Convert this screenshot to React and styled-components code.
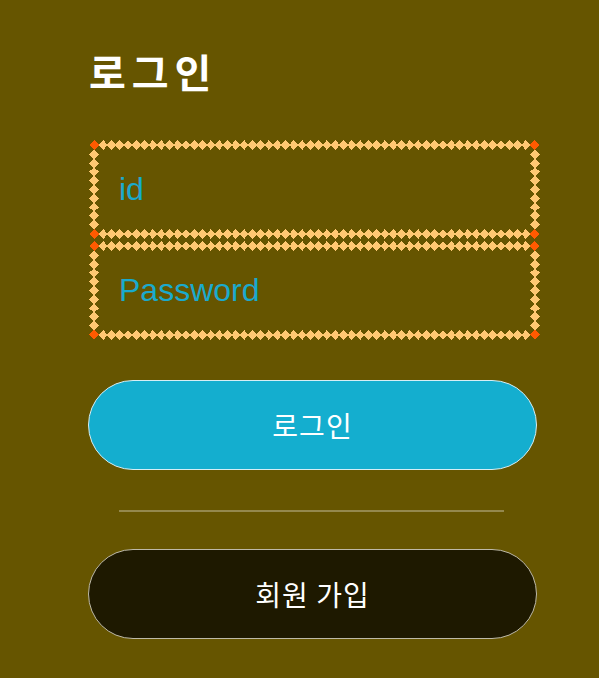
import React from "react";
import styled, { createGlobalStyle } from "styled-components";

const GlobalStyle = createGlobalStyle`
  html, body {
    margin: 0;
    padding: 0;
    background: #665500;
  }
  body {
    font-family: "Liberation Sans", "Noto Sans CJK KR", sans-serif;
  }
`;

const diamondSvg =
  "data:image/svg+xml," +
  encodeURIComponent(
    `<svg xmlns='http://www.w3.org/2000/svg' width='85' height='85' viewBox='0 0 85 85' shape-rendering='crispEdges'>` +
      `<g fill='#ff5a00'>` +
      `<polygon points='15,0 30,15 15,30 0,15'/>` +
      `<polygon points='70,0 85,15 70,30 55,15'/>` +
      `<polygon points='15,55 30,70 15,85 0,70'/>` +
      `<polygon points='70,55 85,70 70,85 55,70'/>` +
      `</g>` +
      `<g fill='#ffc872'>` +
      `<polygon points='42.5,0 55,15 42.5,30 30,15'/>` +
      `<polygon points='42.5,55 55,70 42.5,85 30,70'/>` +
      `<polygon points='15,30 30,42.5 15,55 0,42.5'/>` +
      `<polygon points='70,30 85,42.5 70,55 55,42.5'/>` +
      `</g>` +
      `</svg>`
  );

const Page = styled.main`
  padding: 42px 0 40px 88px;
`;

const Form = styled.form`
  width: 450px;
  display: flex;
  flex-direction: column;
`;

const Title = styled.h1`
  margin: 0 0 40px 1px;
  font-family: "Noto Sans CJK KR", sans-serif;
  font-size: 40px;
  letter-spacing: 6px;
  font-weight: 700;
  line-height: 58px;
  color: #ffffff;
`;

const Fields = styled.div`
  display: flex;
  flex-direction: column;
  gap: 2px;
  margin-left: 1px;
`;

const Input = styled.input`
  box-sizing: border-box;
  width: 451px;
  height: 99px;
  padding: 0 20px;
  border: 10px solid transparent;
  border-image: url("${diamondSvg}") 30 round;
  image-rendering: pixelated;
  background: transparent;
  font-family: "Liberation Sans", Arial, sans-serif;
  font-size: 32px;
  color: #1aaacd;
  outline: none;

  &::placeholder {
    color: #1aaacd;
    opacity: 1;
  }
`;

const Button = styled.button`
  box-sizing: border-box;
  width: 449px;
  height: 90px;
  border-radius: 45px;
  border: 1px solid ${(p) => (p.$primary ? "#d6eef4" : "#bdb9a8")};
  background: ${(p) => (p.$primary ? "#14aecf" : "#1e1900")};
  color: #ffffff;
  font-family: "Noto Sans CJK KR", sans-serif;
  font-size: 28px;
  letter-spacing: 1px;
  font-weight: 400;
  cursor: pointer;
`;

const Divider = styled.hr`
  width: 385px;
  margin: 40px 0 37px 31px;
  border: none;
  height: 2px;
  background: rgba(255, 255, 255, 0.3);
`;

export default function App() {
  return (
    <>
      <GlobalStyle />
      <Page>
        <Form onSubmit={(e) => e.preventDefault()}>
          <Title>로그인</Title>
          <Fields>
            <Input type="text" placeholder="id" />
            <Input type="password" placeholder="Password" />
          </Fields>
          <Button type="submit" $primary style={{ marginTop: 40 }}>
            로그인
          </Button>
          <Divider />
          <Button type="button">회원 가입</Button>
        </Form>
      </Page>
    </>
  );
}
